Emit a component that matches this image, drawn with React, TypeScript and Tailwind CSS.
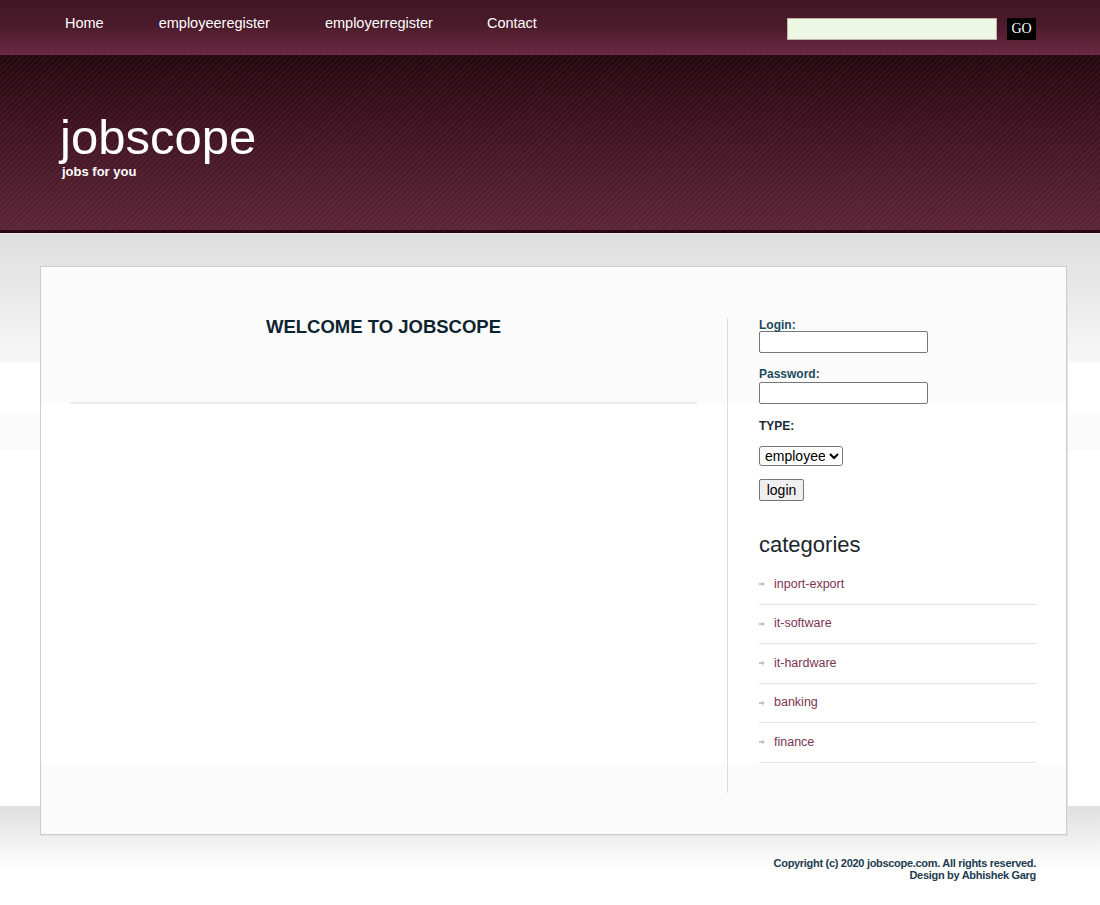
import React from "react";

const navLinks = [
  { label: "Home", cls: "ml-[65px]" },
  { label: "employeeregister", cls: "ml-[55px]" },
  { label: "employerregister", cls: "ml-[55px]" },
  { label: "Contact", cls: "ml-[54px]" },
];

const categories = ["inport-export", "it-software", "it-hardware", "banking", "finance"];

const Arrow = () => (
  <svg width="6" height="6" viewBox="0 0 6 6" className="mr-[9px] shrink-0">
    <path d="M0 2h3V0.5L6 3 3 5.5V4H0z" fill="#c4c4c4" />
  </svg>
);

const App = () => {
  return (
    <div className="w-[1100px] min-h-[905px] bg-white font-['Liberation_Sans',Arial,sans-serif]">
      {/* ======= NAV BAR ======= */}
      <div className="h-[55px] flex items-start bg-[linear-gradient(to_bottom,#421725_0%,#4a1b2b_45%,#6b2a41_100%)]">
        <nav className="flex pt-[14px]">
          {navLinks.map((l) => (
            <a key={l.label} className={`${l.cls} text-white text-[14.5px] leading-[18px]`}>
              {l.label}
            </a>
          ))}
        </nav>
        <div className="ml-auto mr-[64px] mt-[18px] flex">
          <input className="w-[210px] h-[22px] bg-[#edf7e4] border border-[#bdb3a8]" />
          <button className="ml-[10px] w-[29px] h-[22px] bg-black text-white text-[14px] font-['Liberation_Serif',serif] leading-[22px]">
            GO
          </button>
        </div>
      </div>

      {/* ======= HEADER ======= */}
      <div className="h-[178px] border-b-[3px] border-[#2b0710] pl-[60px] pt-[58px] bg-[repeating-linear-gradient(135deg,rgba(255,255,255,0.035)_0px,rgba(255,255,255,0.035)_2px,transparent_2px,transparent_4px),linear-gradient(to_bottom,#240710_0%,#3e1220_40%,#5c2437_100%)]">
        <h1 className="text-white text-[49px] leading-[49px]">jobscope</h1>
        <p className="ml-[2px] mt-[2px] text-white text-[13px] font-bold leading-[16px]">jobs for you</p>
      </div>
      <div className="h-[1px] bg-[#ece6e8]" />

      {/* ======= BODY ======= */}
      <div className="pt-[32px] pb-[40px] bg-[linear-gradient(to_bottom,#dedede_0px,#f7f7f7_128px,#fff_130px,#fff_181px,#fafafa_181px,#fafafa_216px,#fff_216px,#fff_572px,#dfdfdf_572px,#fff_636px)]">
        <div className="ml-[40px] w-[1027px] h-[569px] border border-[#cdcdcd] shadow-[1px_1px_0_#e2e2e2] flex pt-[51px] bg-[linear-gradient(to_bottom,#fbfbfb_0px,#fbfbfb_136px,#fff_136px,#fff_498px,#fbfbfb_498px)]">
          {/* Left column */}
          <div className="w-[687px] h-[475px] pl-[29px] pr-[30px] border-r border-[#dedede]">
            <h2 className="text-center text-[18.5px] leading-[18px] font-bold text-[#0d2430]">
              WELCOME TO JOBSCOPE
            </h2>
            <div className="mt-[66px] h-[2px] bg-[#ececec]" />
          </div>

          {/* Right column */}
          <div className="pl-[31px]">
            <div className="w-[277px]">
              <label className="block mt-[1px] text-[12px] leading-[12px] font-bold text-[#1d4a5e]">Login:</label>
              <input className="block w-[169px] h-[22px] bg-white border border-[#767676] rounded-[2px]" />

              <label className="block mt-[15px] text-[12px] leading-[13px] font-bold text-[#1d4a5e]">Password:</label>
              <input type="password" className="block mt-[1px] w-[169px] h-[22px] bg-white border border-[#767676] rounded-[2px]" />

              <p className="mt-[15px] text-[12px] leading-[14px] font-bold text-[#1b2c35]">TYPE:</p>
              <select className="mt-[13px] h-[20px] w-[84px] bg-white border border-[#767676] rounded-[3px] text-[14px] leading-[16px] text-black px-[1px]">
                <option>employee</option>
                <option>employer</option>
              </select>

              <button className="block mt-[11px] w-[45px] h-[22px] bg-[#efefef] border border-[#767676] rounded-[2px] text-[14px] text-black">
                login
              </button>

              <h3 className="mt-[31px] text-[22px] leading-[26px] text-[#1b262c]">categories</h3>
              <ul className="mt-[7px]">
                {categories.map((c) => (
                  <li
                    key={c}
                    className="h-[39.5px] flex items-center border-b border-[#e4e4e4] text-[12.5px] text-[#7b3452]"
                  >
                    <Arrow />
                    {c}
                  </li>
                ))}
              </ul>
            </div>
          </div>
        </div>

        {/* ======= FOOTER ======= */}
        <div className="mt-[22px] mr-[64px] text-right text-[11px] tracking-[-0.3px] leading-[12px] font-bold text-[#1e3b4f]">
          <p>Copyright (c) 2020 jobscope.com. All rights reserved.</p>
          <p>Design by Abhishek Garg</p>
        </div>
      </div>
    </div>
  );
};

export default App;
